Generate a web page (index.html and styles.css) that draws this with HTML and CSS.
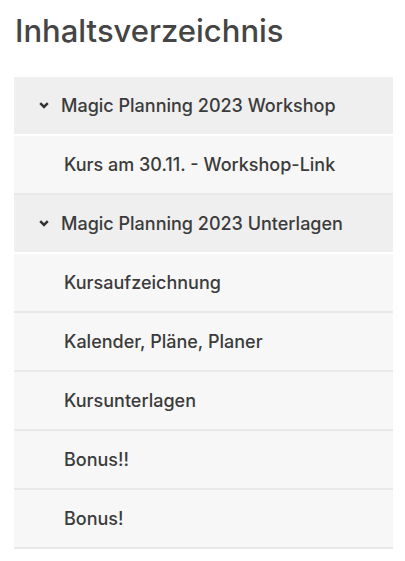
FILE: index.html
```html
<!DOCTYPE html>
<html lang="de">
<head>
    <meta charset="UTF-8">
    <meta name="viewport" content="width=device-width, initial-scale=1.0">
    <title>Inhaltsverzeichnis</title>
    <link rel="stylesheet" href="styles.css">
</head>
<body>
    <div class="toc">
        <h1 class="toc-title">Inhaltsverzeichnis</h1>

        <ul class="toc-list">
            <!-- Section: Workshop -->
            <li class="toc-section">
                <div class="toc-section-title">
                    <svg class="chevron" width="10" height="7" viewBox="0 0 10 7"><path d="M1.2 1.2 L5 5 L8.8 1.2" fill="none" stroke="#333" stroke-width="2.5"/></svg>
                    <span>Magic Planning 2023 Workshop</span>
                </div>
                <ul class="toc-items">
                    <li class="toc-item">Kurs am 30.11. - Workshop-Link</li>
                </ul>
            </li>

            <!-- Section: Unterlagen -->
            <li class="toc-section">
                <div class="toc-section-title">
                    <svg class="chevron" width="10" height="7" viewBox="0 0 10 7"><path d="M1.2 1.2 L5 5 L8.8 1.2" fill="none" stroke="#333" stroke-width="2.5"/></svg>
                    <span>Magic Planning 2023 Unterlagen</span>
                </div>
                <ul class="toc-items">
                    <li class="toc-item">Kursaufzeichnung</li>
                    <li class="toc-item">Kalender, Pläne, Planer</li>
                    <li class="toc-item">Kursunterlagen</li>
                    <li class="toc-item">Bonus!!</li>
                    <li class="toc-item">Bonus!</li>
                </ul>
            </li>
        </ul>
    </div>
</body>
</html>
```

FILE: styles.css
```css
/* Reset */
* {
    margin: 0;
    padding: 0;
    box-sizing: border-box;
}

body {
    font-family: Inter, "Open Sans", Arial, sans-serif;
    background-color: #ffffff;
    color: #444444;
    padding: 0 12px 0 14px;
}

ul {
    list-style: none;
}

/* Title */
.toc-title {
    font-size: 31px;
    font-weight: 500;
    color: #454545;
    line-height: 1;
    padding-top: 15px;
    margin-bottom: 31px;
    padding-left: 1px;
}

/* Sections */
.toc-section-title {
    display: flex;
    align-items: center;
    height: 59px;
    padding-left: 25px;
    background-color: #efefef;
    border-bottom: 2px solid #ffffff;
    font-size: 18px;
    font-weight: 500;
    color: #3b3b3b;
}

.chevron {
    margin-right: 12px;
    flex-shrink: 0;
}

/* Items */
.toc-item {
    display: flex;
    align-items: center;
    height: 59px;
    padding-left: 50px;
    background-color: #f7f7f7;
    border-bottom: 2px solid #e9e9e9;
    font-size: 18px;
    font-weight: 500;
    color: #3b3b3b;
}
```
